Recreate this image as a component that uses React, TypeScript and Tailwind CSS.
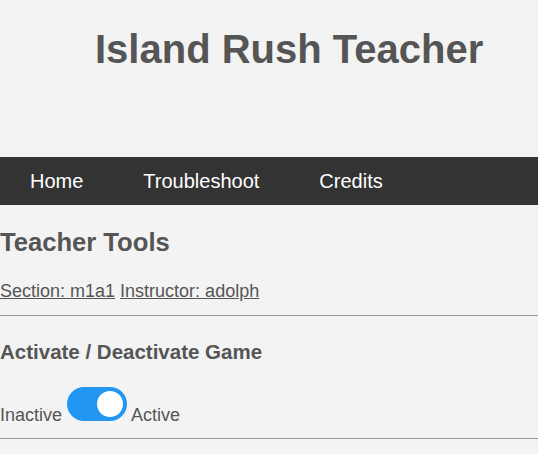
export default function App() {
  return (
    <div
      className="min-h-[454px] w-full bg-[#f3f3f3] text-[#555555]"
      style={{ fontFamily: '"Liberation Sans", Arial, sans-serif' }}
    >
      <header className="h-[157px] pt-[26px]">
        <h1 className="pl-[95px] text-[40px] font-bold leading-[46px]">Island Rush Teacher</h1>
      </header>
      <nav className="flex h-[48px] items-center bg-[#333333]">
        <a className="px-[30px] text-[20px] leading-[48px] text-white">Home</a>
        <a className="px-[30px] text-[20px] leading-[48px] text-white">Troubleshoot</a>
        <a className="px-[30px] text-[20px] leading-[48px] text-white">Credits</a>
      </nav>
      <main>
        <h2 className="mt-[22px] text-[25.6px] font-bold leading-[30px]">Teacher Tools</h2>
        <div className="mt-[24px] text-[18px] leading-[21px]">
          <a className="underline">Section: m1a1</a> <a className="underline">Instructor: adolph</a>
        </div>
        <div className="mt-[13px] border-t border-[#999999]" />
        <h3 className="mt-[24px] text-[20.5px] font-bold leading-[24px]">Activate / Deactivate Game</h3>
        <div className="mt-[23px] text-[18px] leading-[21px]">
          Inactive{" "}
          <span className="relative inline-block h-[34px] w-[60px] rounded-full bg-[#2196F3] align-baseline">
            <span className="absolute left-[30px] top-[4px] h-[26px] w-[26px] rounded-full bg-white" />
          </span>{" "}
          Active
        </div>
        <div className="mt-[12px] border-t border-[#999999]" />
      </main>
    </div>
  );
}
